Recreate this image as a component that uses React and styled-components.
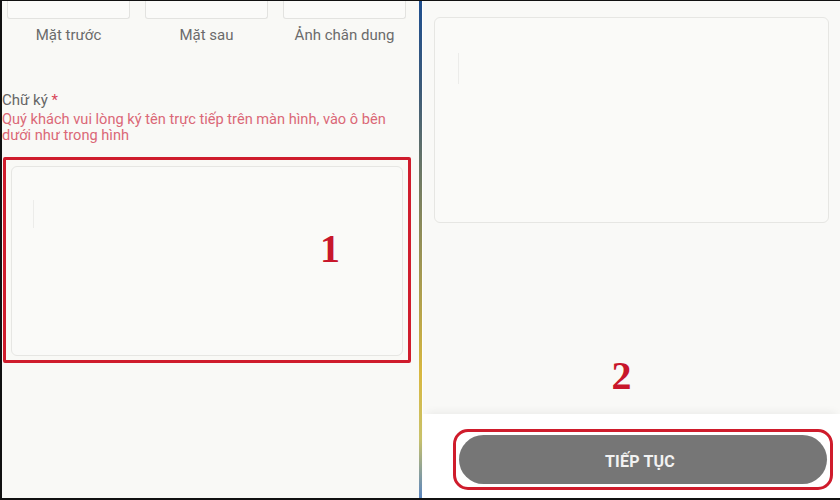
import React from "react";
import styled, { createGlobalStyle } from "styled-components";

const Global = createGlobalStyle`
  html, body { margin: 0; padding: 0; background: #ffffff; }
  body { font-family: Roboto, "Liberation Sans", Arial, sans-serif; }
`;

const Frame = styled.div`
  width: 840px;
  height: 500px;
  box-sizing: border-box;
  border-top: 1px solid #111;
  border-left: 2px solid #111;
  border-bottom: 2px solid #111;
  display: flex;
  overflow: hidden;
`;

const LeftPanel = styled.section`
  width: 417px;
  flex: none;
  background: #f9f9f6;
  display: flex;
  flex-direction: column;
  position: relative;
`;

const Divider = styled.div`
  width: 3px;
  flex: none;
  background: linear-gradient(#1f4f8f 0%, #3d5b78 18%, #8a8a5a 45%, #d8b840 75%, #c9c26a 88%, #5b86c0 100%);
`;

const Spacer = styled.div`
  width: 1px;
  flex: none;
  background: #ffffff;
`;

const RightPanel = styled.section`
  flex: 1;
  background: #f9f9f7;
  display: flex;
  flex-direction: column;
  position: relative;
`;

const PhotoGrid = styled.div`
  display: grid;
  grid-template-columns: repeat(3, 123px);
  column-gap: 15px;
  padding-left: 5px;
`;

const PhotoSlot = styled.div`
  height: 17px;
  border: 1px solid #e3e3e0;
  border-top: none;
  border-radius: 0 0 3px 3px;
  background: #fbfbf9;
`;

const PhotoLabel = styled.div`
  margin-top: 6px;
  text-align: center;
  font-size: 15px;
  line-height: 20px;
  color: #6b6b6b;
  white-space: nowrap;
`;

const FieldTitle = styled.div`
  margin-top: 46px;
  font-size: 15px;
  line-height: 18px;
  color: #666;
`;

const Required = styled.span`
  color: #d8475a;
`;

const Hint = styled.div`
  font-size: 14.6px;
  line-height: 16px;
  color: #db6877;
  max-width: 400px;
  margin-top: 2px;
`;

const Highlight = styled.div`
  margin: 14px 0 0 1px;
  width: 408px;
  height: 206px;
  box-sizing: border-box;
  border: 3px solid #cf1c2c;
  border-radius: 2px;
  padding: 6px 5px 4px 5px;
  display: flex;
`;

const SignaturePad = styled.div`
  flex: 1;
  border: 1px solid #e6e6e3;
  border-radius: 6px;
  background: #fafaf8;
  position: relative;
  display: flex;
  align-items: flex-start;
  justify-content: flex-end;
  padding: 62px 62px 0 0;
`;

const Caret = styled.div`
  position: absolute;
  left: ${(p) => p.$left}px;
  top: ${(p) => p.$top}px;
  width: 1px;
  height: ${(p) => p.$h}px;
  background: #ececea;
`;

const StepNumber = styled.div`
  font-family: "Liberation Serif", "Times New Roman", serif;
  font-weight: 700;
  font-size: 40px;
  line-height: 40px;
  color: #c8162b;
`;

const PreviewBox = styled.div`
  margin: 16px 11px 0 11px;
  height: 204px;
  border: 1px solid #e6e6e3;
  border-radius: 6px;
  background: #fafaf8;
  position: relative;
`;

const StepArea = styled.div`
  flex: 1;
  display: flex;
  justify-content: center;
  align-items: flex-end;
  padding-right: 20px;
  padding-bottom: 18px;
`;

const Footer = styled.div`
  height: 84px;
  background: #ffffff;
  box-shadow: 0 -6px 8px -4px rgba(0, 0, 0, 0.06);
  padding: 15px 7px 0 30px;
  box-sizing: border-box;
`;

const ButtonOutline = styled.div`
  border: 3px solid #cf1c2c;
  border-radius: 15px;
  padding: 3px;
  box-sizing: border-box;
  height: 61px;
`;

const ContinueButton = styled.button`
  width: 100%;
  height: 100%;
  border: none;
  border-radius: 26px;
  background: #767676;
  color: #f2f2f2;
  font-family: Roboto, "Liberation Sans", Arial, sans-serif;
  font-weight: 700;
  font-size: 16px;
  letter-spacing: 0.2px;
  padding: 4px 6px 0 0;
`;

export default function App() {
  const photos = ["Mặt trước", "Mặt sau", "Ảnh chân dung"];
  return (
    <>
      <Global />
      <Frame>
        <LeftPanel>
          <PhotoGrid>
            {photos.map((p) => (
              <PhotoSlot key={p} />
            ))}
            {photos.map((p) => (
              <PhotoLabel key={p + "l"}>{p}</PhotoLabel>
            ))}
          </PhotoGrid>
          <FieldTitle>
            Chữ ký <Required>*</Required>
          </FieldTitle>
          <Hint>
            Quý khách vui lòng ký tên trực tiếp trên màn hình, vào ô bên dưới như trong hình
          </Hint>
          <Highlight>
            <SignaturePad>
              <Caret $left={21} $top={33} $h={28} />
              <StepNumber>1</StepNumber>
            </SignaturePad>
          </Highlight>
        </LeftPanel>
        <Divider />
        <Spacer />
        <RightPanel>
          <PreviewBox>
            <Caret $left={23} $top={35} $h={31} />
          </PreviewBox>
          <StepArea>
            <StepNumber>2</StepNumber>
          </StepArea>
          <Footer>
            <ButtonOutline>
              <ContinueButton>TIẾP TỤC</ContinueButton>
            </ButtonOutline>
          </Footer>
        </RightPanel>
      </Frame>
    </>
  );
}
